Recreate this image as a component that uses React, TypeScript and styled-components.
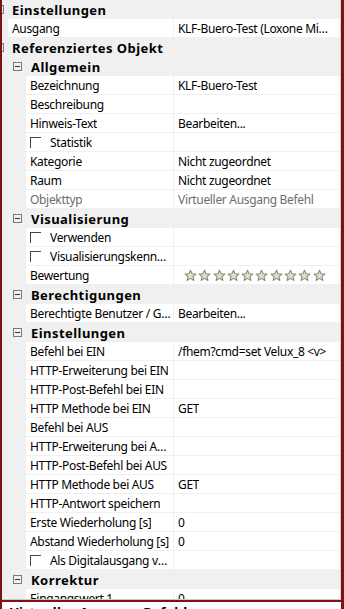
import React from "react";
import styled, { createGlobalStyle } from "styled-components";

const frame = "#7d1212";
const line = "#f0f0f0";
const gutterBg = "#f0f0f0";

const GlobalStyle = createGlobalStyle`
  html, body {
    margin: 0;
    padding: 0;
    background: #ffffff;
  }
  body {
    font-family: "Noto Sans", "Open Sans", sans-serif;
    font-size: 12px;
    letter-spacing: -0.32px;
    color: #000000;
  }
`;

const Frame = styled.div`
  width: 344px;
  height: 609px;
  box-sizing: border-box;
  border-left: 2px solid ${frame};
  border-right: 3px solid ${frame};
  display: flex;
  flex-direction: column;
  overflow: hidden;
`;

const Grid = styled.div`
  height: 600px;
  flex: 0 0 600px;
  overflow: hidden;
  border-right: 1px solid #d6d6d6;
  border-bottom: 1px solid #c8c8c8;
  box-sizing: border-box;
`;

const Footer = styled.div`
  flex: 1;
  border-top: 2px solid ${frame};
  padding: 2px 8px 0;
  font-size: 13px;
  letter-spacing: 0.45px;
  font-weight: 700;
  line-height: 16px;
  overflow: hidden;
`;

const Row = styled.div`
  height: 19px;
  box-sizing: border-box;
  display: flex;
  align-items: stretch;
  white-space: nowrap;
`;

const CategoryRow = styled(Row)<{ $level: number }>`
  background: ${gutterBg};
  align-items: center;
  font-size: 13px;
  letter-spacing: 0.45px;
  font-weight: 700;
  padding-left: ${(p) => (p.$level === 0 ? 0 : 11)}px;
`;

const Gutter = styled.div<{ $width: number }>`
  flex: 0 0 ${(p) => p.$width}px;
  background: ${gutterBg};
`;

const LabelColumn = styled.div`
  flex: 0 0 172px;
  width: 172px;
  min-width: 0;
  display: flex;
  overflow: hidden;
`;

const LabelCell = styled.div<{ $muted?: boolean }>`
  flex: 1;
  min-width: 0;
  display: flex;
  align-items: center;
  gap: 9px;
  padding-left: 4px;
  padding-right: 2px;
  border-bottom: 1px solid ${line};
  border-right: 1px solid ${line};
  color: ${(p) => (p.$muted ? "#6d6d6d" : "#000")};
  overflow: hidden;
`;

const ValueCell = styled.div<{ $muted?: boolean }>`
  flex: 1;
  min-width: 0;
  display: flex;
  align-items: center;
  padding-left: 4px;
  padding-right: 5px;
  border-bottom: 1px solid ${line};
  color: ${(p) => (p.$muted ? "#6d6d6d" : "#000")};
  overflow: hidden;
`;

const Clip = styled.span`
  display: block;
  min-width: 0;
  overflow: hidden;
  text-overflow: ellipsis;
`;

const Expander = styled.span<{ $edge?: boolean }>`
  width: 9px;
  height: 9px;
  box-sizing: border-box;
  border: 1px solid #7a7a7a;
  position: relative;
  margin-right: ${(p) => (p.$edge ? 8 : 9)}px;
  margin-left: ${(p) => (p.$edge ? -7 : 0)}px;
  flex: 0 0 auto;
  &::after {
    content: "";
    position: absolute;
    left: 1px;
    right: 1px;
    top: 3px;
    height: 1px;
    background: #333;
  }
`;

const CheckBox = styled.span`
  width: 11px;
  height: 11px;
  box-sizing: border-box;
  border-top: 1px solid #444;
  border-left: 1px solid #444;
  flex: 0 0 auto;
`;

const Stars = styled.div`
  display: flex;
  gap: 1.3px;
  padding-left: 6px;
`;

const Star: React.FC = () => (
  <svg width="13" height="13" viewBox="0 0 24 24">
    <path
      d="M12 2.2l2.9 6.6 7.1.6-5.4 4.7 1.7 7-6.3-3.8-6.3 3.8 1.7-7L2 9.4l7.1-.6z"
      fill="#e4decb"
      stroke="#8e8a80"
      strokeWidth="2"
      strokeLinejoin="round"
    />
  </svg>
);

interface PropProps {
  level: number;
  label: string;
  value?: React.ReactNode;
  check?: boolean;
  muted?: boolean;
}

const Prop: React.FC<PropProps> = ({ level, label, value, check, muted }) => (
  <Row>
    <LabelColumn>
      <Gutter $width={level === 0 ? 6 : 24} />
      <LabelCell $muted={muted}>
        {check && <CheckBox />}
        <Clip>{label}</Clip>
      </LabelCell>
    </LabelColumn>
    <ValueCell $muted={muted}>
      {typeof value === "string" ? <Clip>{value}</Clip> : value}
    </ValueCell>
  </Row>
);

const Category: React.FC<{ level: number; title: string }> = ({ level, title }) => (
  <CategoryRow $level={level}>
    <Expander $edge={level === 0} />
    {title}
  </CategoryRow>
);

const App: React.FC = () => (
  <>
    <GlobalStyle />
    <Frame>
      <Grid>
        <Category level={0} title="Einstellungen" />
        <Prop level={0} label="Ausgang" value="KLF-Buero-Test (Loxone Miniserver)" />
        <Category level={0} title="Referenziertes Objekt" />
        <Category level={1} title="Allgemein" />
        <Prop level={1} label="Bezeichnung" value="KLF-Buero-Test" />
        <Prop level={1} label="Beschreibung" value="" />
        <Prop level={1} label="Hinweis-Text" value="Bearbeiten..." />
        <Prop level={1} label="Statistik" check />
        <Prop level={1} label="Kategorie" value="Nicht zugeordnet" />
        <Prop level={1} label="Raum" value="Nicht zugeordnet" />
        <Prop level={1} label="Objekttyp" value="Virtueller Ausgang Befehl" muted />
        <Category level={1} title="Visualisierung" />
        <Prop level={1} label="Verwenden" check />
        <Prop level={1} label="Visualisierungskennzeichnung" check />
        <Prop
          level={1}
          label="Bewertung"
          value={
            <Stars>
              {Array.from({ length: 10 }).map((_, i) => (
                <Star key={i} />
              ))}
            </Stars>
          }
        />
        <Category level={1} title="Berechtigungen" />
        <Prop level={1} label="Berechtigte Benutzer / Gruppen" value="Bearbeiten..." />
        <Category level={1} title="Einstellungen" />
        <Prop level={1} label="Befehl bei EIN" value="/fhem?cmd=set Velux_8 <v>" />
        <Prop level={1} label="HTTP-Erweiterung bei EIN" />
        <Prop level={1} label="HTTP-Post-Befehl bei EIN" />
        <Prop level={1} label="HTTP Methode bei EIN" value="GET" />
        <Prop level={1} label="Befehl bei AUS" />
        <Prop level={1} label="HTTP-Erweiterung bei AUS" />
        <Prop level={1} label="HTTP-Post-Befehl bei AUS" />
        <Prop level={1} label="HTTP Methode bei AUS" value="GET" />
        <Prop level={1} label="HTTP-Antwort speichern" />
        <Prop level={1} label="Erste Wiederholung [s]" value="0" />
        <Prop level={1} label="Abstand Wiederholung [s]" value="0" />
        <Prop level={1} label="Als Digitalausgang verwenden" check />
        <Category level={1} title="Korrektur" />
        <Prop level={1} label="Eingangswert 1" value="0" />
      </Grid>
      <Footer>Virtueller Ausgang Befehl</Footer>
    </Frame>
  </>
);

export default App;
